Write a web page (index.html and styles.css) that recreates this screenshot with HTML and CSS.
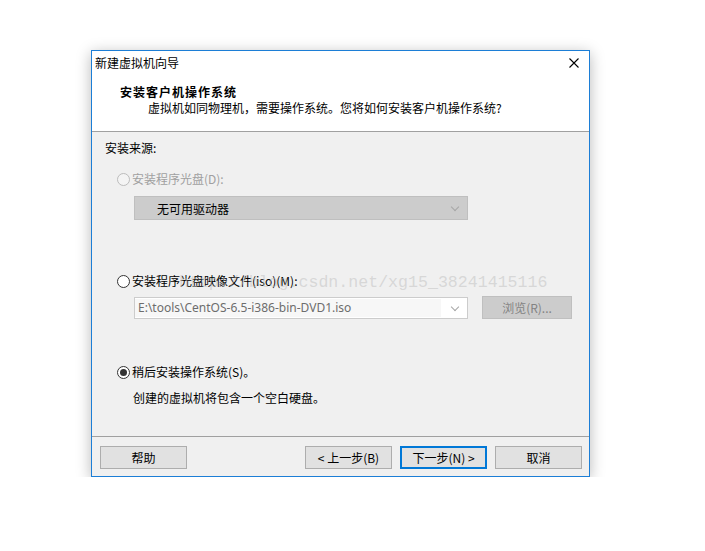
FILE: index.html
```html
<!DOCTYPE html>
<html lang="zh-CN">

<head>
    <meta charset="UTF-8">
    <title>新建虚拟机向导</title>
    <link rel="stylesheet" href="styles.css">
</head>

<body>
    <!-- 对话框 -->
    <div class="window">
        <!-- 标题栏 + 头部 -->
        <div class="top">
            <div class="titlebar">
                <span class="title">新建虚拟机向导</span>
                <svg class="close" width="10" height="10" viewBox="0 0 10 10">
                    <path d="M0.5 0.5 L9.5 9.5 M9.5 0.5 L0.5 9.5" stroke="#000" stroke-width="1.1" fill="none" />
                </svg>
            </div>
            <div class="header">
                <div class="header-title">安装客户机操作系统</div>
                <div class="header-sub">虚拟机如同物理机，需要操作系统。您将如何安装客户机操作系统?</div>
            </div>
        </div>

        <!-- 内容区域 -->
        <div class="content">
            <div class="row label">安装来源:</div>

            <div class="row radio-row first disabled">
                <span class="radio"></span>安装程序光盘(D):
            </div>
            <div class="combo combo-disabled">
                <span>无可用驱动器</span>
                <span class="chevron"></span>
            </div>

            <div class="row radio-row second">
                <span class="radio"></span>安装程序光盘映像文件(iso)(M):
            </div>
            <div class="iso-line">
                <div class="combo combo-iso">
                    <span class="iso-text">E:\tools\CentOS-6.5-i386-bin-DVD1.iso</span>
                    <span class="chevron"></span>
                </div>
                <div class="btn btn-disabled">浏览(R)...</div>
            </div>

            <div class="row radio-row third">
                <span class="radio checked"></span>稍后安装操作系统(S)。
            </div>
            <div class="row note">创建的虚拟机将包含一个空白硬盘。</div>

            <!-- 水印 -->
            <div class="watermark">http://blog.csdn.net/xg15_38241415116</div>
        </div>

        <!-- 底部按钮 -->
        <div class="footer">
            <div class="btn">帮助</div>
            <div class="spacer"></div>
            <div class="btn">&lt; 上一步(B)</div>
            <div class="btn btn-default">下一步(N) &gt;</div>
            <div class="btn">取消</div>
        </div>
    </div>
</body>

</html>
```

FILE: styles.css
```css
/* 全局样式 */
body {
    margin: 0;
    background-color: #fff;
    font-family: "Noto Sans CJK SC", "Liberation Sans", sans-serif;
    font-size: 12px;
    color: #000;
}

/* 窗口 */
.window {
    width: 497px;
    margin: 50px 0 0 91px;
    border: 1px solid #1c7ed6;
    background-color: #f0f0f0;
    box-shadow: 0 3px 14px rgba(0, 0, 0, 0.28);
}

/* 白色顶部 */
.top {
    background-color: #fff;
    border-bottom: 1px solid #a0a0a0;
}

.titlebar {
    height: 23px;
    display: flex;
    align-items: center;
    padding-left: 3px;
}

.title {
    flex: 1;
    line-height: 16px;
}

.close {
    margin-right: 10px;
    margin-top: 1px;
}

.header {
    padding: 10px 0 15px 0;
    line-height: 16px;
}

.header-title {
    padding-left: 28px;
    font-weight: bold;
    letter-spacing: 1px;
}

.header-sub {
    padding-left: 56px;
}

/* 内容区域 */
.content {
    position: relative;
    height: 304px;
    box-sizing: border-box;
    padding: 8px 0 0 13px;
}

.row {
    line-height: 16px;
    height: 16px;
}

.radio-row {
    display: flex;
    align-items: center;
    padding-left: 12px;
}

.radio-row.first {
    margin-top: 15px;
}

.radio-row.second {
    margin-top: 53px;
}

.radio-row.third {
    margin-top: 45px;
}

.disabled {
    color: #a0a0a0;
}

/* 单选按钮 */
.radio {
    width: 11px;
    height: 11px;
    border: 1px solid #333;
    border-radius: 50%;
    background-color: #fff;
    margin-right: 2px;
    position: relative;
}

.disabled .radio {
    border-color: #bcbcbc;
    background-color: #f4f4f4;
}

.radio.checked::after {
    content: "";
    position: absolute;
    left: 2px;
    top: 2px;
    width: 7px;
    height: 7px;
    border-radius: 50%;
    background-color: #333;
}

/* 下拉框 */
.combo {
    box-sizing: border-box;
    width: 334px;
    display: flex;
    align-items: center;
    justify-content: space-between;
}

.combo-disabled {
    height: 24px;
    margin: 9px 0 0 29px;
    background-color: #cccccc;
    border: 1px solid #bfbfbf;
    padding: 0 9px 0 22px;
}

.chevron {
    width: 5px;
    height: 5px;
    border-right: 1px solid #a6a6a6;
    border-bottom: 1px solid #a6a6a6;
    transform: rotate(45deg);
    margin-top: -3px;
}

.iso-line {
    display: flex;
    align-items: flex-start;
    margin: 7px 0 0 29px;
}

.combo-iso {
    height: 22px;
    margin-top: 1px;
    border: 1px solid #cccccc;
    background-color: #fff;
    padding: 0 9px 0 0;
}

.iso-text {
    flex: 1;
    align-self: stretch;
    margin: 1px 11px 1px 0;
    padding-left: 3px;
    background-color: #f7f7f7;
    color: #6d6d6d;
    line-height: 18px;
    font-family: "Noto Sans", "Noto Sans CJK SC", sans-serif;
}

.note {
    margin-top: 10px;
    padding-left: 28px;
}

/* 水印 */
.watermark {
    position: absolute;
    left: 87px;
    top: 142px;
    font-family: "Liberation Mono", monospace;
    font-size: 16.6px;
    line-height: 18px;
    color: rgba(190, 190, 190, 0.5);
    white-space: nowrap;
    pointer-events: none;
}

/* 底部 */
.footer {
    border-top: 1px solid #a0a0a0;
    height: 40px;
    box-sizing: border-box;
    padding: 9px 7px 0 8px;
    display: flex;
    align-items: flex-start;
    gap: 8px;
}

.spacer {
    flex: 1;
}

/* 按钮 */
.btn {
    box-sizing: border-box;
    width: 87px;
    height: 23px;
    border: 1px solid #adadad;
    background-color: #e1e1e1;
    display: flex;
    align-items: center;
    justify-content: center;
    line-height: 16px;
}

.btn-default {
    border: 2px solid #0078d7;
}

.btn-disabled {
    width: 90px;
    margin-left: 14px;
    background-color: #cccccc;
    border-color: #bfbfbf;
    color: #838383;
}
```
